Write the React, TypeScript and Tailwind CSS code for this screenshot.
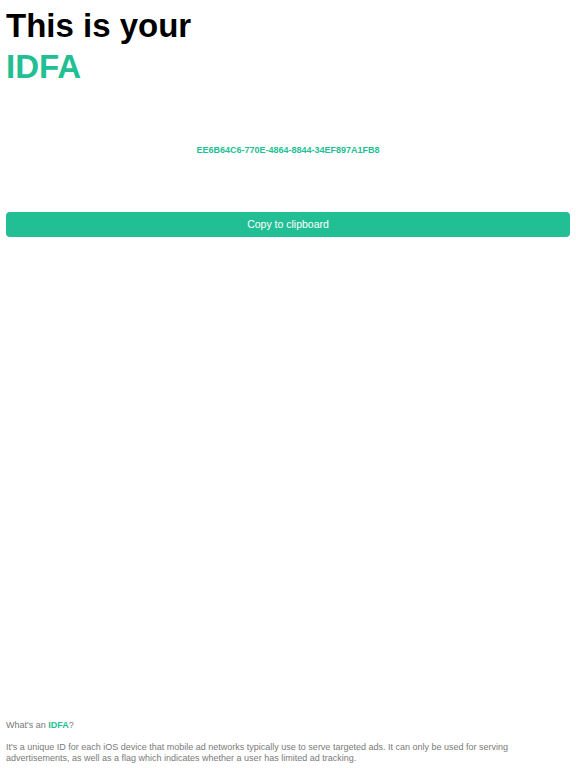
import React from 'react';

const App: React.FC = () => {
  const idfa = 'EE6B64C6-770E-4864-8844-34EF897A1FB8';

  return (
    <div className="flex h-[768px] flex-col bg-white px-[6px] font-['Liberation_Sans',Arial,sans-serif]">
      <h1 className="pt-[5px] text-[33px] font-bold leading-[41px] text-black">
        This is your
        <br />
        <span className="text-[#22bf95]">IDFA</span>
      </h1>

      <div className="mt-[57px] text-center text-[9px] font-bold leading-[12px] text-[#22bf95]">{idfa}</div>

      <button className="mt-[56px] h-[25px] w-full rounded-[4px] bg-[#22bf95] text-[10.5px] text-white">
        Copy to clipboard
      </button>

      <div className="mt-auto pb-[4px] text-[9px] leading-[11px] text-[#7a7a7a]">
        <p>
          What's an <span className="font-bold text-[#22bf95]">IDFA</span>?
        </p>
        <p className="mt-[11px]">
          It's a unique ID for each iOS device that mobile ad networks typically use to serve targeted ads. It can only be used for serving advertisements, as well as a flag which indicates whether a user has limited ad tracking.
        </p>
      </div>
    </div>
  );
};

export default App;
